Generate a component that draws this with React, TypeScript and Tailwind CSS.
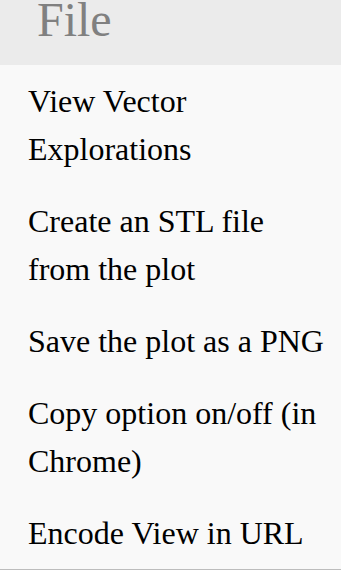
const items = [
  "View Vector Explorations",
  "Create an STL file from the plot",
  "Save the plot as a PNG",
  "Copy option on/off (in Chrome)",
  "Encode View in URL",
];

export default function App() {
  return (
    <div className="w-[341px] h-[570px] overflow-hidden bg-[#f9f9f9] font-['Liberation_Serif','Times_New_Roman',serif]">
      <div className="h-[65px] bg-[#ebebeb] pl-[37px]">
        <h1 className="text-[48px] leading-[40px] text-[#808080]">File</h1>
      </div>
      <ul className="flex flex-col border-b border-[#bdbdbd]">
        {items.map((item) => (
          <li
            key={item}
            className="pl-[28px] pr-[12px] py-[12px] text-[32px] leading-[48px] text-black"
          >
            {item}
          </li>
        ))}
      </ul>
    </div>
  );
}
